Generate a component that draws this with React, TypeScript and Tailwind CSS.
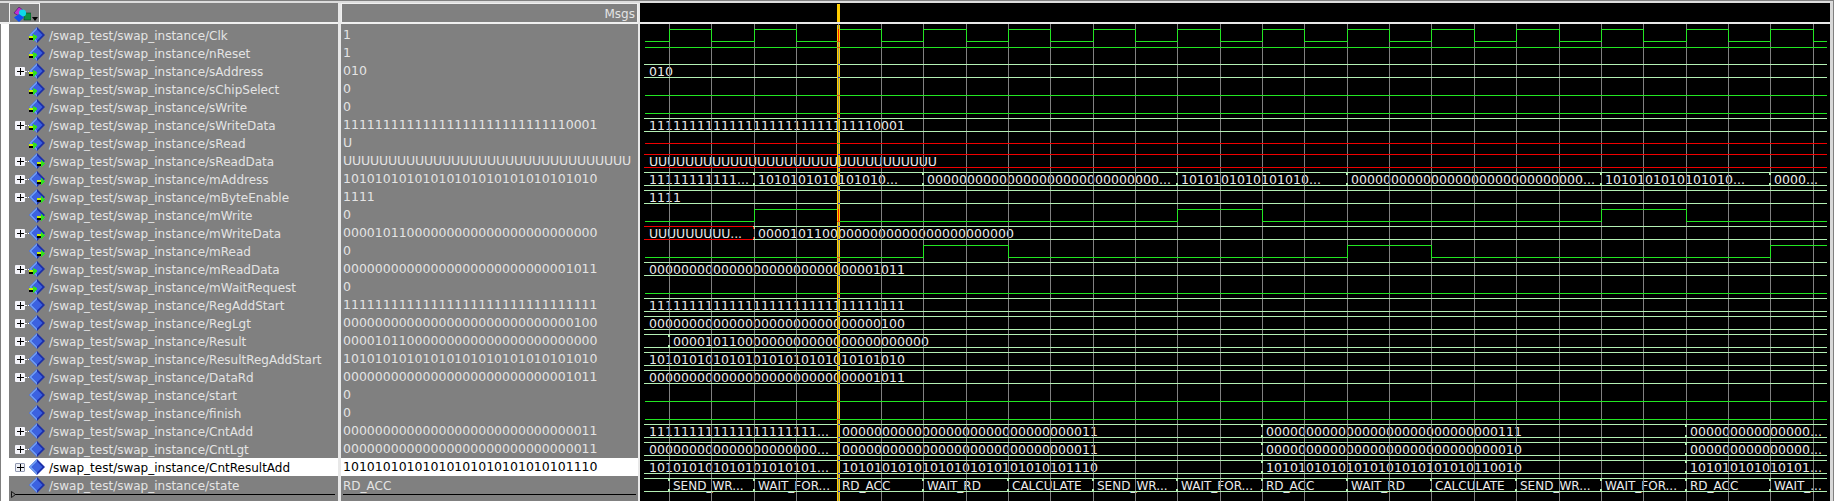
const E = (k: number) => Math.floor(669.5 + 42.36 * k);
const START = 645;
const END = 1827;
const TOP = 26;
const RH = 18;

type Sig = { name: string; value: string; exp?: boolean; dir?: "in" | "out"; track?: boolean; word?: boolean };

const ones = "1".repeat(32);
const SIGS: Sig[] = [
  { name: "Clk", value: "1", dir: "in" },
  { name: "nReset", value: "1", dir: "in" },
  { name: "sAddress", value: "010", dir: "in", exp: true },
  { name: "sChipSelect", value: "0", dir: "in" },
  { name: "sWrite", value: "0", dir: "in" },
  { name: "sWriteData", value: "11111111111111111111111111110001", dir: "in", exp: true },
  { name: "sRead", value: "U", dir: "in" },
  { name: "sReadData", value: "UUUUUUUUUUUUUUUUUUUUUUUUUUUUUUUU", dir: "out", exp: true, track: true },
  { name: "mAddress", value: "10101010101010101010101010101010", dir: "out", exp: true },
  { name: "mByteEnable", value: "1111", dir: "out", exp: true },
  { name: "mWrite", value: "0", dir: "out" },
  { name: "mWriteData", value: "00001011000000000000000000000000", dir: "out", exp: true },
  { name: "mRead", value: "0", dir: "out" },
  { name: "mReadData", value: "00000000000000000000000000001011", dir: "in", exp: true },
  { name: "mWaitRequest", value: "0", dir: "in" },
  { name: "RegAddStart", value: ones, exp: true },
  { name: "RegLgt", value: "00000000000000000000000000000100", exp: true },
  { name: "Result", value: "00001011000000000000000000000000", exp: true },
  { name: "ResultRegAddStart", value: "10101010101010101010101010101010", exp: true },
  { name: "DataRd", value: "00000000000000000000000000001011", exp: true },
  { name: "start", value: "0" },
  { name: "finish", value: "0" },
  { name: "CntAdd", value: "00000000000000000000000000000011", exp: true },
  { name: "CntLgt", value: "00000000000000000000000000000011", exp: true },
  { name: "CntResultAdd", value: "10101010101010101010101010101110", exp: true },
  { name: "state", value: "RD_ACC", word: true },
];

const z = (n: number) => "0".repeat(n);
const a = (n: number) => "10".repeat(Math.ceil(n / 2)).slice(0, n);
const o = (n: number) => "1".repeat(n);

type Seg = { from: number; text?: string; red?: boolean };
const BUS: Record<number, Seg[]> = {
  2: [{ from: START, text: "010" }],
  5: [{ from: START, text: "11111111111111111111111111110001" }],
  7: [{ from: START, text: "U".repeat(32), red: true }],
  8: [
    { from: START, text: o(11) + "..." },
    { from: E(2), text: a(16) + "..." },
    { from: E(6), text: z(29) + "..." },
    { from: E(12), text: a(16) + "..." },
    { from: E(16), text: z(29) + "..." },
    { from: E(22), text: a(16) + "..." },
    { from: E(26), text: z(4) + "..." },
  ],
  9: [{ from: START, text: "1111" }],
  11: [
    { from: START, text: "U".repeat(9) + "...", red: true },
    { from: E(2), text: "00001011" + z(24) },
  ],
  13: [{ from: START, text: z(28) + "1011" }],
  15: [{ from: START, text: o(32) }],
  16: [{ from: START, text: z(29) + "100" }],
  17: [{ from: START }, { from: E(0), text: "00001011" + z(24) }],
  18: [{ from: START, text: a(32) }],
  19: [{ from: START, text: z(28) + "1011" }],
  22: [
    { from: START, text: o(21) + "..." },
    { from: E(4), text: z(30) + "11" },
    { from: E(14), text: z(29) + "111" },
    { from: E(24), text: z(15) + "..." },
  ],
  23: [
    { from: START, text: z(21) + "..." },
    { from: E(4), text: z(30) + "11" },
    { from: E(14), text: z(30) + "10" },
    { from: E(24), text: z(15) + "..." },
  ],
  24: [
    { from: START, text: a(21) + "..." },
    { from: E(4), text: a(28) + "1110" },
    { from: E(14), text: a(27) + "10010" },
    { from: E(24), text: a(15) + "..." },
  ],
  25: [
    { from: START },
    { from: E(0), text: "SEND_WR..." },
    { from: E(2), text: "WAIT_FOR..." },
    { from: E(4), text: "RD_ACC" },
    { from: E(6), text: "WAIT_RD" },
    { from: E(8), text: "CALCULATE" },
    { from: E(10), text: "SEND_WR..." },
    { from: E(12), text: "WAIT_FOR..." },
    { from: E(14), text: "RD_ACC" },
    { from: E(16), text: "WAIT_RD" },
    { from: E(18), text: "CALCULATE" },
    { from: E(20), text: "SEND_WR..." },
    { from: E(22), text: "WAIT_FOR..." },
    { from: E(24), text: "RD_ACC" },
    { from: E(26), text: "WAIT_..." },
  ],
};

const BIT: Record<number, number[]> = {
  0: Array.from({ length: 28 }, (_, i) => E(i)),
  1: [],
  3: [],
  4: [],
  10: [E(2), E(4), E(12), E(14), E(22), E(24)],
  12: [E(6), E(8), E(16), E(18), E(26)],
  14: [],
  20: [],
  21: [],
};

const GREEN = "#22e622";
const PALE = "#b4f0b4";
const RED = "#f00000";
const px = (v: number) => v + 0.5;

function bitPath(row: number, edges: number[]) {
  const t = TOP + row * RH;
  const hi = px(t + 3);
  const lo = px(t + 15);
  let level = row === 1;
  let d = `M${START} ${level ? hi : lo}`;
  for (const e of edges) {
    d += `H${px(e)}`;
    level = !level;
    d += `V${level ? hi : lo}`;
  }
  d += `H${END}`;
  return d;
}

function textWidth(s: string) {
  if (!/^[01U.]+$/.test(s)) return undefined;
  let w = 0;
  for (const c of s) w += c === "U" ? 9 : c === "." ? 4 : 8;
  return w;
}

function Waves() {
  const rows = Object.keys(BUS).map(Number);
  const marks = Array.from({ length: 26 }, (_, i) => i);
  return (
    <svg width={1190} height={477} viewBox="640 24 1190 477" className="block" shapeRendering="crispEdges">
      <rect x={640} y={24} width={1190} height={477} fill="#000" />
      {rows.map((r) =>
        BUS[r].map((s, i) => {
          const w = s.text ? textWidth(s.text) : undefined;
          return s.text ? (
            <text
              key={`${r}-${i}`}
              x={s.from + 4}
              y={TOP + r * RH + 14}
              fill="#ececec"
              fontSize={w ? 12.5 : 12}
              fontFamily="'DejaVu Sans', sans-serif"
              shapeRendering="auto"
              textLength={w}
              lengthAdjust={w ? "spacing" : undefined}
            >
              {s.text}
            </text>
          ) : null;
        }),
      )}
      {Array.from({ length: 28 }, (_, k) => (
        <line key={k} x1={px(E(k))} x2={px(E(k))} y1={24} y2={501} stroke="#808080" />
      ))}
      {rows.map((r) => {
        const t = TOP + r * RH;
        const segs = BUS[r];
        return segs.map((s, i) => {
          const next = i + 1 < segs.length ? segs[i + 1].from : END;
          const c = s.red ? RED : PALE;
          return (
            <g key={`${r}-l${i}`}>
              <line x1={s.from - 1} x2={next} y1={px(t + 2)} y2={px(t + 2)} stroke={c} />
              <line x1={s.from - 1} x2={next} y1={px(t + 15)} y2={px(t + 15)} stroke={c} />
              {i + 1 < segs.length && (
                <g stroke={c}>
                  <line x1={px(next - 1)} x2={px(next - 1)} y1={t + 2} y2={t + 5} />
                  <line x1={px(next - 1)} x2={px(next - 1)} y1={t + 13} y2={t + 16} />
                </g>
              )}
              {i > 0 && (
                <g stroke={PALE}>
                  <line x1={px(s.from)} x2={px(s.from)} y1={t + 2} y2={t + 5} />
                  <line x1={px(s.from)} x2={px(s.from)} y1={t + 13} y2={t + 16} />
                </g>
              )}
            </g>
          );
        });
      })}
      {Object.entries(BIT).map(([r, edges]) => (
        <path key={r} d={bitPath(Number(r), edges)} fill="none" stroke={GREEN} />
      ))}
      <line x1={START} x2={END} y1={px(TOP + 6 * RH + 9)} y2={px(TOP + 6 * RH + 9)} stroke={RED} />
      <rect x={837} y={25} width={3} height={476} fill="#ffcc00" />
      <rect x={838} y={25} width={1} height={476} fill="#8f9a70" />
      <rect x={838} y={29} width={1} height={13} fill="#ff2000" />
      <rect x={838} y={209} width={1} height={13} fill="#ff2000" />
      {marks.map((r) => {
        const t = TOP + r * RH;
        if (r in BUS) {
          return (
            <g key={r} fill="#2030d0">
              <rect x={838} y={t + 2} width={2} height={1} />
              <rect x={838} y={t + 15} width={2} height={1} />
            </g>
          );
        }
        if (r === 6) return <rect key={r} x={837} y={t + 9} width={3} height={1} fill="#30b020" />;
        return <rect key={r} x={837} y={r === 1 ? t + 3 : t + 15} width={3} height={1} fill="#e05010" />;
      })}
    </svg>
  );
}

function Diamond({ dir }: { dir?: "in" | "out" }) {
  return (
    <svg width={16} height={16} viewBox="0 0 16 16" className="shrink-0" shapeRendering="auto">
      <polygon points="8,0 16,8 8,16 0,8" fill="#1c2fa8" />
      <polygon points="8,0 0,8 8,16 8,13 3,8 8,3" fill="#6e9cf2" />
      <polygon points="8,2.5 13.5,8 8,13.5 2.5,8" fill="#3c62e0" />
      {dir === "in" && (
        <g shapeRendering="crispEdges">
          <rect x={0} y={11} width={5} height={2} fill="#000" />
          <rect x={0} y={9} width={5} height={2} fill="#c6f000" />
          <polygon points="4,6.5 8.5,10 4,14" fill="#30e020" />
        </g>
      )}
      {dir === "out" && (
        <g shapeRendering="crispEdges">
          <rect x={8} y={11} width={5} height={2} fill="#000" />
          <rect x={8} y={9} width={5} height={2} fill="#c6f000" />
          <polygon points="12,6.5 16,10 12,14" fill="#30e020" />
        </g>
      )}
    </svg>
  );
}

function Expander({ selected }: { selected: boolean }) {
  return (
    <div className="flex w-[14px] shrink-0 items-center">
      <div
        className={
          selected
            ? "flex h-[9px] w-[10px] items-center justify-center rounded-[1px] border border-[#9098b0] bg-[#eef0f6]"
            : "flex h-[9px] w-[10px] items-center justify-center rounded-[1px] bg-[#f4f4fa]"
        }
      >
        <svg width={7} height={7} viewBox="0 0 7 7" shapeRendering="crispEdges">
          <path d="M0 3.5H7M3.5 0V7" stroke="#000" />
        </svg>
      </div>
      <div className="h-0 w-[4px] border-t border-dotted border-white" />
    </div>
  );
}

function NameRow({ sig, selected }: { sig: Sig; selected: boolean }) {
  return (
    <div
      className={
        selected
          ? "flex h-[18px] items-center bg-white pl-[6px] text-black"
          : "flex h-[18px] items-center pl-[6px] text-[#e4e4e4]"
      }
    >
      {sig.exp ? <Expander selected={selected} /> : <div className="w-[14px] shrink-0" />}
      <Diamond dir={sig.dir} />
      <span className="ml-[4px] whitespace-nowrap pt-px text-[12px]">/swap_test/swap_instance/{sig.name}</span>
    </div>
  );
}

function ValueRow({ sig, selected }: { sig: Sig; selected: boolean }) {
  const size = sig.word ? "text-[12px]" : "text-[12.5px]";
  const track = sig.track ? "tracking-[-0.15px]" : "tracking-normal";
  return (
    <div
      className={
        selected
          ? "flex h-[18px] items-center bg-white pl-[2px] text-black"
          : "flex h-[18px] items-center pl-[2px] text-[#e4e4e4]"
      }
    >
      <span className={`whitespace-nowrap pt-px ${size} ${track}`}>{sig.value}</span>
    </div>
  );
}

function ToolIcon() {
  return (
    <svg width={18} height={15} viewBox="0 0 18 15" shapeRendering="auto">
      <polygon points="1,6 6,0 11,4 6,9" fill="#c030d0" stroke="#401060" strokeWidth={0.6} />
      <rect x={11} y={6} width={7} height={7} fill="#109040" stroke="#064020" strokeWidth={0.6} />
      <circle cx={9.5} cy={6} r={3.6} fill="#10d8e8" />
      <polygon points="6,7 11,10.5 6,15 1,10.5" fill="#1050f0" />
    </svg>
  );
}

export default function App() {
  return (
    <div className="flex h-[501px] w-[1834px] flex-col overflow-hidden bg-[#808080] pr-px pt-px font-['DejaVu_Sans',sans-serif] text-[12px]">
      <div className="h-[2px] shrink-0 bg-[#dcdcdc]" />
      <div className="flex min-h-0 flex-1">
        <div className="flex w-[338px] shrink-0 flex-col">
          <div className="h-[19px] shrink-0 pl-[9px]">
            <div className="flex h-[19px] w-[31px] items-end justify-between border-x border-t border-[#f0f0f0] pl-[3px] pr-[1px]">
              <ToolIcon />
              <svg width={6} height={4} viewBox="0 0 6 4" className="mb-[1px]">
                <polygon points="0,0 6,0 3,4" fill="#000" />
              </svg>
            </div>
          </div>
          <div className="h-[2px] shrink-0 bg-[#f0f0f0]" />
          <div className="flex min-h-0 flex-1 pl-px">
            <div className="w-[8px] shrink-0 bg-white" />
            <div className="min-w-0 flex-1 pt-[2px]">
              {SIGS.map((s, i) => (
                <NameRow key={s.name} sig={s} selected={i === 24} />
              ))}
              <div className="relative ml-[2px] mr-[3px] h-px bg-black">
                <svg width={5} height={7} viewBox="0 0 5 7" className="absolute left-0 top-[-3px]">
                  <polygon points="0.5,0.5 4.5,3.5 0.5,6.5" fill="#808080" stroke="#000" strokeWidth={0.8} />
                </svg>
              </div>
            </div>
          </div>
        </div>
        <div className="w-[3px] shrink-0 bg-[#e8e8e8]" />
        <div className="flex w-[297px] shrink-0 flex-col">
          <div className="flex h-[19px] shrink-0 items-center justify-end border-x border-t border-[#f0f0f0] pr-[2px] pt-px text-[#e4e4e4]">
            Msgs
          </div>
          <div className="h-[2px] shrink-0 bg-[#f0f0f0]" />
          <div className="min-h-0 flex-1 pt-[2px]">
            {SIGS.map((s, i) => (
              <ValueRow key={s.name} sig={s} selected={i === 24} />
            ))}
            <div className="ml-[2px] mr-[2px] h-px bg-black" />
          </div>
        </div>
        <div className="w-[2px] shrink-0 bg-[#e8e8e8]" />
        <div className="flex w-[1190px] shrink-0 flex-col">
          <div className="relative h-[19px] shrink-0 bg-black">
            <div className="absolute left-[197px] top-px h-[18px] w-[3px] bg-[#ffcc00]" />
          </div>
          <div className="h-[2px] shrink-0 bg-[#e8e8e8]" />
          <Waves />
        </div>
        <div className="w-[3px] shrink-0 bg-[#d8d8d8]" />
      </div>
    </div>
  );
}
